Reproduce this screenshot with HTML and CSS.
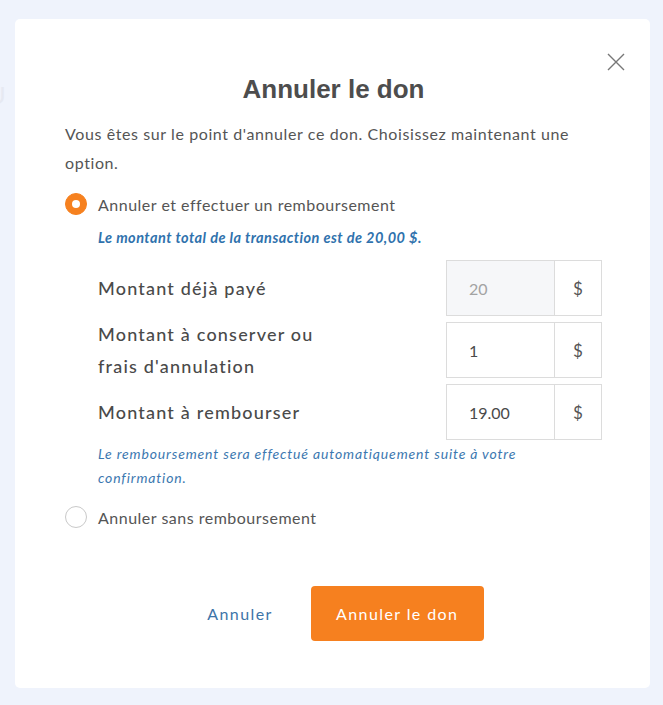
FILE: index.html
```html
<!DOCTYPE html>
<html lang="fr">
<head>
<meta charset="utf-8">
<title>Annuler le don</title>
<link rel="stylesheet" href="styles.css">
</head>
<body>
<div class="bg-letter">U</div>
<div class="modal">
  <button class="close" aria-label="Fermer">
    <svg width="18" height="18" viewBox="0 0 18 18"><path d="M1 1L17 17M17 1L1 17" stroke="#777" stroke-width="1.4" fill="none"/></svg>
  </button>
  <h1 class="title">Annuler le don</h1>
  <p class="intro">Vous êtes sur le point d'annuler ce don. Choisissez maintenant une option.</p>

  <div class="option">
    <span class="radio checked"></span>
    <span class="option-label">Annuler et effectuer un remboursement</span>
  </div>
  <div class="sub">
    <p class="note strong">Le montant total de la transaction est de 20,00 $.</p>
    <div class="rows">
      <div class="row">
        <div class="row-label">Montant déjà payé</div>
        <div class="group disabled"><span class="val">20</span><span class="addon">$</span></div>
      </div>
      <div class="row">
        <div class="row-label">Montant à conserver ou<br>frais d'annulation</div>
        <div class="group"><span class="val">1</span><span class="addon">$</span></div>
      </div>
      <div class="row">
        <div class="row-label">Montant à rembourser</div>
        <div class="group"><span class="val">19.00</span><span class="addon">$</span></div>
      </div>
    </div>
    <p class="note small">Le remboursement sera effectué automatiquement suite à votre<br>confirmation.</p>
  </div>

  <div class="option second">
    <span class="radio"></span>
    <span class="option-label">Annuler sans remboursement</span>
  </div>

  <div class="actions">
    <button class="link-btn">Annuler</button>
    <button class="primary-btn">Annuler le don</button>
  </div>
</div>
</body>
</html>
```
FILE: styles.css
```css
html, body {
  margin: 0;
  padding: 0;
}
body {
  background: #eff3fc;
  font-family: Lato, "Open Sans", sans-serif;
  color: #4a4a4a;
  padding: 19px 13px 17px 15px;
  box-sizing: border-box;
  height: 705px;
  position: relative;
  overflow: hidden;
}
.bg-letter {
  position: absolute;
  left: -12px;
  top: 80px;
  font-size: 24px;
  color: #e6e9f2;
}
.modal {
  position: relative;
  background: #fff;
  border-radius: 5px;
  height: 669px;
  box-sizing: border-box;
  padding: 55px 48px 0 50px;
}
.close {
  position: absolute;
  top: 34px;
  right: 25px;
  border: 0;
  background: none;
  padding: 0;
  width: 18px;
  height: 18px;
  display: block;
}
.title {
  margin: 0;
  text-align: center;
  font-family: "Liberation Sans", Arial, sans-serif;
  font-weight: 700;
  font-size: 26px;
  line-height: 30px;
  color: #4d4d4d;
}
.intro {
  margin: 15px 0 0;
  font-size: 16px;
  line-height: 29px;
  color: #555;
  letter-spacing: 0.6px;
}
.option {
  display: flex;
  align-items: center;
  gap: 11px;
  margin-top: 16px;
}
.option.second {
  margin-top: 16px;
}
.radio {
  width: 22px;
  height: 22px;
  border-radius: 50%;
  border: 1px solid #c9c9c9;
  box-sizing: border-box;
  background: #fff;
  position: relative;
  flex: none;
}
.radio.checked {
  background: #f6811f;
  border-color: #f6811f;
}
.radio.checked::after {
  content: "";
  position: absolute;
  left: 50%;
  top: 50%;
  width: 8px;
  height: 8px;
  margin: -4px 0 0 -4px;
  background: #fff;
  border-radius: 50%;
}
.option-label {
  font-size: 16px;
  color: #555;
  letter-spacing: 0.5px;
}
.sub {
  padding-left: 33px;
}
.note {
  margin: 0;
  font-style: italic;
  color: #2f72ad;
}
.note.strong {
  font-size: 14.5px;
  font-weight: 700;
  margin-top: 14px;
  letter-spacing: 0.45px;
}
.note.small {
  font-size: 14px;
  line-height: 24px;
  margin-top: 2px;
  color: #3c78b0;
  letter-spacing: 0.85px;
}
.rows {
  display: flex;
  flex-direction: column;
  gap: 6px;
  margin-top: 14px;
}
.row {
  display: flex;
  align-items: center;
  justify-content: space-between;
}
.row-label {
  font-size: 18px;
  line-height: 32px;
  margin: -4px 0;
  color: #4a4a4a;
  letter-spacing: 1.2px;
  font-weight: 500;
}
.group {
  display: flex;
  width: 156px;
  height: 56px;
  border: 1px solid #dcdcdc;
  box-sizing: border-box;
}
.val {
  flex: 1;
  display: flex;
  align-items: center;
  padding-left: 22px;
  font-size: 16px;
  color: #4a4a4a;
  border-right: 1px solid #dcdcdc;
}
.group.disabled .val {
  background: #f6f7f9;
  color: #a3a3a3;
}
.addon {
  width: 46px;
  display: flex;
  align-items: center;
  justify-content: center;
  font-size: 17px;
  color: #555;
}
.actions {
  display: flex;
  justify-content: center;
  align-items: center;
  gap: 38px;
  margin-top: 58px;
  padding-left: 24px;
}
.link-btn {
  border: 0;
  background: none;
  font-family: Lato, sans-serif;
  font-size: 16px;
  letter-spacing: 1.4px;
  color: #3d74a8;
  padding: 0;
}
.primary-btn {
  border: 0;
  background: #f6801f;
  color: #fff;
  font-family: Lato, sans-serif;
  font-size: 16px;
  letter-spacing: 1.4px;
  width: 173px;
  height: 55px;
  border-radius: 4px;
}
```
